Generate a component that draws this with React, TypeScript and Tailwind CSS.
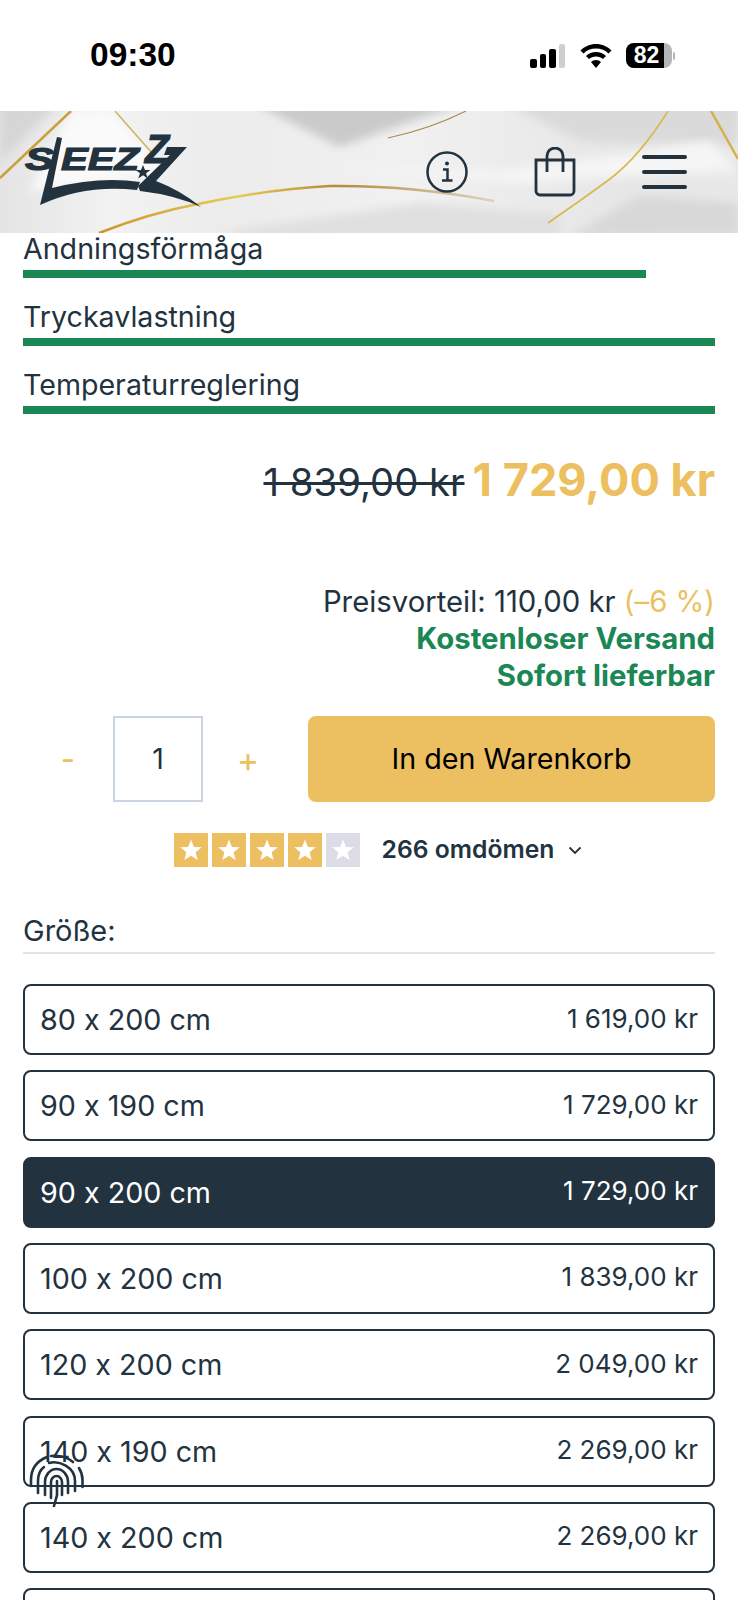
import React from 'react';

const sizes = [
  { label: '80 x 200 cm', price: '1 619,00 kr' },
  { label: '90 x 190 cm', price: '1 729,00 kr' },
  { label: '90 x 200 cm', price: '1 729,00 kr', active: true },
  { label: '100 x 200 cm', price: '1 839,00 kr' },
  { label: '120 x 200 cm', price: '2 049,00 kr' },
  { label: '140 x 190 cm', price: '2 269,00 kr' },
  { label: '140 x 200 cm', price: '2 269,00 kr' },
  { label: '', price: '' },
];

const bars = [
  { label: 'Andningsförmåga', width: 'w-[90%]' },
  { label: 'Tryckavlastning', width: 'w-full' },
  { label: 'Temperaturreglering', width: 'w-full' },
];

const HeaderBackground = () => (
  <svg className="absolute inset-0 h-full w-full" viewBox="0 0 738 122" preserveAspectRatio="none">
    <defs>
      <linearGradient id="base" x1="0" y1="0" x2="1" y2="0">
        <stop offset="0" stopColor="#e4e4e4" />
        <stop offset="0.15" stopColor="#f2f2f2" />
        <stop offset="0.3" stopColor="#ececec" />
        <stop offset="0.55" stopColor="#f1f1f1" />
        <stop offset="0.85" stopColor="#e6e6e6" />
        <stop offset="1" stopColor="#e8e8e8" />
      </linearGradient>
      <linearGradient id="gold" x1="0" y1="0" x2="1" y2="0">
        <stop offset="0" stopColor="#c9962f" />
        <stop offset="0.35" stopColor="#e6cc58" />
        <stop offset="0.6" stopColor="#b58a3a" />
        <stop offset="1" stopColor="#dcd3bf" />
      </linearGradient>
      <filter id="soft">
        <feGaussianBlur stdDeviation="5" />
      </filter>
      <filter id="softer">
        <feGaussianBlur stdDeviation="0.4" />
      </filter>
    </defs>
    <rect width="738" height="122" fill="url(#base)" />
    <polygon points="250,-10 470,-10 339,36" fill="#cacaca" filter="url(#soft)" />
    <polygon points="500,-10 738,-10 738,34 580,30" fill="#dadada" filter="url(#soft)" />
    <polygon points="0,-10 62,-10 0,50" fill="#d6d6d6" filter="url(#soft)" />
    <polygon points="72,0 112,0 165,60 30,80" fill="#fafafa" filter="url(#soft)" />
    <polygon points="300,55 500,60 710,30 738,60 520,72" fill="#f5f5f5" filter="url(#soft)" />
    <polygon points="240,118 420,92 560,104 560,130 220,130" fill="#e0e0e0" filter="url(#soft)" />
    <polygon points="570,125 640,85 738,92 738,125" fill="#d8d8d8" filter="url(#soft)" />
    <g fill="none" filter="url(#softer)">
      <path d="M71 0 L0 67" stroke="#c9a23c" strokeWidth="2.5" />
      <path d="M115 0 L152 42" stroke="#cdb25c" strokeWidth="1.5" />
      <path d="M466 0 Q430 18 388 27" stroke="#a98a55" strokeWidth="1.2" />
      <path d="M668 0 Q640 45 610 68 Q580 90 548 112" stroke="#d7b94c" strokeWidth="1.6" />
      <path d="M711 0 L738 48" stroke="#d3b04a" strokeWidth="2.5" />
      <path d="M99 122 Q150 102 198 93 Q270 78 330 75 Q410 74 494 90" stroke="url(#gold)" strokeWidth="2.5" />
    </g>
  </svg>
);

// logo is drawn in page coordinates, header starts at y=111
const Logo = () => (
  <svg width="220" height="122" viewBox="0 111 220 122" className="relative shrink-0">
    <g fill="#22333f" stroke="#22333f" strokeWidth="1.2" fontFamily="'Liberation Sans', sans-serif" fontWeight="700" fontStyle="italic">
      <text x="25" y="170" fontSize="32" textLength="29" lengthAdjust="spacingAndGlyphs">S</text>
      <text x="61" y="170" fontSize="32" textLength="78" lengthAdjust="spacingAndGlyphs">EEZ</text>
      <text x="145" y="163" fontSize="41" textLength="24" lengthAdjust="spacingAndGlyphs">Z</text>
    </g>
    <path d="M57 137 L40 205 Q85 184 137 190 L140 182 Q100 176 52 188 L62 138 Z" fill="#22333f" />
    <path d="M167 147 H187 L156 181 Q180 190 201 207 Q175 195 140 191 L138 186 L170 155 H164 Z" fill="#22333f" />
    <path d="M143 165 l2 5 h5.500 l-4.500 3.300 l1.800 5.200 l-4.800 -3.200 l-4.800 3.200 l1.800 -5.200 l-4.500 -3.300 h5.500 Z" fill="#22333f" />
  </svg>
);

const HeaderIcons = () => (
  <div className="relative ml-auto mr-[51px] flex items-center">
    <svg width="42" height="42" viewBox="0 0 42 42" fill="none" className="mr-[66px]">
      <circle cx="21" cy="21" r="19.500" stroke="#22333f" strokeWidth="2.500" />
      <circle cx="21" cy="12.500" r="2" fill="#22333f" />
      <path d="M17 18.500h4.500v11M16 29.500h10.500" stroke="#22333f" strokeWidth="2.500" />
    </svg>
    <svg width="42" height="50" viewBox="0 0 42 50" fill="none" className="mr-[66px]">
      <path d="M2 13h38v31a4 4 0 0 1-4 4H6a4 4 0 0 1-4-4V13Z" stroke="#22333f" strokeWidth="2.800" />
      <path d="M13 25V9a8 8 0 0 1 16 0v16" stroke="#22333f" strokeWidth="2.800" />
    </svg>
    <div className="flex w-[45px] flex-col gap-[11.5px]">
      <div className="h-[3.500px] rounded-full bg-[#22333f]" />
      <div className="h-[3.500px] rounded-full bg-[#22333f]" />
      <div className="h-[3.500px] rounded-full bg-[#22333f]" />
    </div>
  </div>
);

const StatusBar = () => (
  <div className="flex h-[111px] items-center bg-white pl-[90px] pr-[63px] font-['Liberation_Sans',sans-serif] text-black">
    <span className="text-[33.500px] font-bold">09:30</span>
    <div className="ml-auto flex items-center">
      <div className="flex items-end gap-[3px]">
        <div className="h-[9px] w-[6.500px] rounded-[2px] bg-black" />
        <div className="h-[14px] w-[6.500px] rounded-[2px] bg-black" />
        <div className="h-[19px] w-[6.500px] rounded-[2px] bg-black" />
        <div className="h-[24px] w-[6.500px] rounded-[2px] bg-[#cfcfcf]" />
      </div>
      <svg width="32" height="24" viewBox="0 0 32 24" className="ml-[15px]">
        <path d="M16 0C10 0 4.500 2.400 .5 6.500l3 3C6.700 6.200 11 4.500 16 4.500s9.300 1.700 12.500 5l3-3C27.500 2.400 22 0 16 0Z" fill="#000" />
        <path d="M16 8c-3.900 0-7.400 1.500-10 4.100l3 3C10.800 13.300 13.200 12.400 16 12.400s5.200.9 7 2.700l3-3C23.400 9.500 19.900 8 16 8Z" fill="#000" />
        <path d="M16 16c-1.900 0-3.700.8-5 2l5 6 5-6c-1.300-1.200-3.100-2-5-2Z" fill="#000" />
      </svg>
      <div className="relative ml-[14px] flex h-[25px] w-[46px] items-center overflow-hidden rounded-[8px] bg-[#b5b5b5]">
        <div className="flex h-full w-[38px] items-center justify-center bg-black pl-[3px] text-[23px] font-bold text-white">82</div>
      </div>
      <div className="ml-[1px] h-[8px] w-[2px] rounded-r-full bg-[#b5b5b5]" />
    </div>
  </div>
);

const Star = ({ on }: { on: boolean }) => (
  <div className={on ? 'flex h-[34px] w-[34px] items-center justify-center bg-[#ecbf60]' : 'flex h-[34px] w-[34px] items-center justify-center bg-[#dcdce6]'}>
    <svg width="24" height="24" viewBox="0 0 24 24">
      <path d="M12 1.500l2.900 7.400 7.900.4-6.200 5 2.100 7.700-6.700-4.300-6.700 4.300 2.100-7.700-6.200-5 7.900-.4Z" fill="#fff" />
    </svg>
  </div>
);

const Fingerprint = () => (
  <svg width="56" height="54" viewBox="0 0 56 54" fill="none" stroke="#22333f" strokeWidth="2.600" strokeLinecap="round" className="absolute left-[29px] top-[1453px]">
    <path d="M2 33V27C2 16 8 8 18 4" />
    <path d="M22 3c8-1 16 1 22 6" />
    <path d="M50 15c2.500 4 3.500 8 3.500 12v7" />
    <path d="M9 40V28C9 22 11 17 15 14" />
    <path d="M20 10c10-3 26 4 26 18v10" />
    <path d="M16 42V29c0-7 5-13 11.500-13S39 22 39 29v11" />
    <path d="M22 45V29c0-3 2.500-6 5.500-6s5.500 3 5.500 6v13" />
    <path d="M28 28v14l-3 11" />
  </svg>
);

export default function App() {
  return (
    <div className="relative h-[1600px] overflow-hidden bg-white font-['Inter',sans-serif] text-[#22333f] [font-feature-settings:'calt'_0]">
      <StatusBar />
      <header className="relative flex h-[122px] items-center overflow-hidden">
        <HeaderBackground />
        <Logo />
        <HeaderIcons />
      </header>

      <main className="px-[23px]">
        <div className="flex flex-col gap-[23.5px]">
          {bars.map((bar) => (
            <div key={bar.label} className="flex flex-col">
              <span className="text-[28.600px] leading-[31px]">{bar.label}</span>
              <div className={`${bar.width} mt-[6px] h-[7.500px] bg-[#1a8754]`} />
            </div>
          ))}
        </div>

        <div className="mt-[39px] flex items-baseline justify-end gap-[8px]">
          <span className="text-[38.300px] leading-[54px] line-through">1 839,00 kr</span>
          <span className="text-[45.100px] font-bold leading-[54px] text-[#ecbf60]">1 729,00 kr</span>
        </div>

        <div className="mt-[74px] flex flex-col items-end text-[29.300px] leading-[37px]">
          <div>
            Preisvorteil: 110,00 kr <span className="text-[#ecbf60]">(–6 %)</span>
          </div>
          <div className="font-bold text-[#1a8754]">Kostenloser Versand</div>
          <div className="font-bold text-[#1a8754]">Sofort lieferbar</div>
        </div>

        <div className="mt-[22.500px] flex h-[86px] items-stretch">
          <div className="flex w-[90px] items-center justify-center text-[30px] font-medium text-[#ecbf60]">-</div>
          <div className="flex w-[90px] items-center justify-center border-2 border-[#cbd5e1] text-[28.600px]">1</div>
          <div className="flex w-[90px] items-center justify-center text-[34px] text-[#ecbf60]">+</div>
          <button className="ml-[15px] flex-1 rounded-[8px] bg-[#ecbf60] text-[28.700px] text-black">In den Warenkorb</button>
        </div>

        <div className="mt-[29px] flex items-center justify-center pl-[18px]">
          <div className="flex gap-[4px]">
            <Star on />
            <Star on />
            <Star on />
            <Star on />
            <Star on={false} />
          </div>
          <span className="ml-[22px] text-[24.700px] font-semibold">266 omdömen</span>
          <svg width="14" height="14" viewBox="0 0 14 14" fill="none" className="ml-[14px]">
            <path d="M1.500 4.500L7 10l5.500-5.500" stroke="#22333f" strokeWidth="1.800" />
          </svg>
        </div>

        <div className="mt-[46px] border-b-2 border-[#e2e5e8] pb-[4px] text-[29px] leading-[34px]">Größe:</div>

        <div className="mt-[30px] flex flex-col gap-[15.300px]">
          {sizes.map((size, index) => (
            <div
              key={index}
              className={
                size.active
                  ? 'flex h-[71px] shrink-0 items-center justify-between rounded-[8px] border-2 border-[#22333f] bg-[#22333f] pl-[15px] pr-[15px] text-white'
                  : 'flex h-[71px] shrink-0 items-center justify-between rounded-[8px] border-2 border-[#22333f] bg-white pl-[15px] pr-[15px]'
              }
            >
              <span className="text-[28.700px]">{size.label}</span>
              <span className="pb-[3px] text-[26px]">{size.price}</span>
            </div>
          ))}
        </div>
      </main>

      <Fingerprint />
    </div>
  );
}
